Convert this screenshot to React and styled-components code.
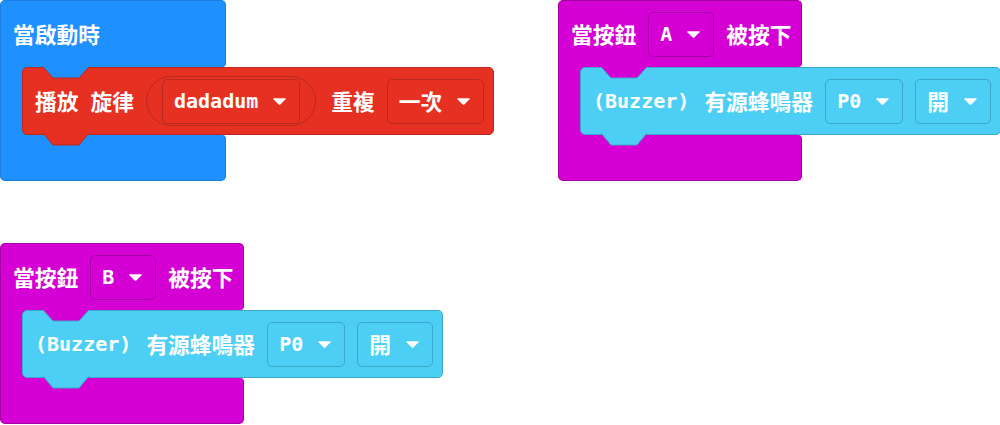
import React from 'react'
import styled, { createGlobalStyle } from 'styled-components'

const GlobalStyle = createGlobalStyle`
  html, body {
    margin: 0;
    background: #ffffff;
  }
  body {
    font-family: 'DejaVu Sans Mono', 'Noto Sans CJK TC', monospace;
  }
`

const colors = {
  start: { fill: '#1e90ff', line: '#1a7ee0' },
  music: { fill: '#e63022', line: '#b82a1e' },
  input: { fill: '#d400d4', line: '#a300a3' },
  buzzer: { fill: '#4dcff5', line: '#3aa8c8' },
}

// 下拉選單的小三角形
const Arrow = () => (
  <svg width="15" height="9" viewBox="0 0 15 9">
    <path
      d="M2 1.2 L13 1.2 Q14.2 1.2 13.5 2.2 L8.3 7.6 Q7.5 8.4 6.7 7.6 L1.5 2.2 Q0.8 1.2 2 1.2 Z"
      fill="#ffffff"
    />
  </svg>
)

const Notch = ({ color, line }) => (
  <NotchSvg width="48" height="13" viewBox="0 0 48 13">
    <path d="M0 0 L1 0 L11 11 L37 11 L47 0 L48 0 L48 -1 L0 -1 Z" fill={color} />
    <path d="M1 0 L11 11 L37 11 L47 0" fill="none" stroke={line} strokeWidth="1" />
  </NotchSvg>
)

const Tab = ({ color, line }) => (
  <TabSvg width="48" height="14" viewBox="0 0 48 14">
    <path d="M1 0 L11 12 L37 12 L47 0 Z" fill={color} />
    <path d="M1 0 L11 12 L37 12 L47 0" fill="none" stroke={line} strokeWidth="1" />
  </TabSvg>
)

const Dropdown = ({ line, children }) => (
  <DropBox $line={line}>
    {children}
    <Arrow />
  </DropBox>
)

const Statement = ({ parent, scheme, children }) => (
  <StatementBox $fill={scheme.fill} $line={scheme.line}>
    <Notch color={parent.fill} line={scheme.line} />
    {children}
    <Tab color={scheme.fill} line={scheme.line} />
  </StatementBox>
)

const HatBlock = ({ x, y, w, scheme, header, children }) => (
  <Hat $x={x} $y={y}>
    <HatHeader $w={w} $fill={scheme.fill} $line={scheme.line}>
      {header}
    </HatHeader>
    <HatBody>
      <Arm $fill={scheme.fill} $line={scheme.line} />
      {children}
    </HatBody>
    <HatFooter $w={w} $fill={scheme.fill} $line={scheme.line} />
  </Hat>
)

const ButtonBlock = ({ x, y, button }) => (
  <HatBlock
    x={x}
    y={y}
    w={244}
    scheme={colors.input}
    header={
      <>
        <Label>當按鈕</Label>
        <Dropdown line={colors.input.line}>
          <Mono>{button}</Mono>
        </Dropdown>
        <Label>被按下</Label>
      </>
    }
  >
    <Statement parent={colors.input} scheme={colors.buzzer}>
      <BuzzerText>
        <Mono>(Buzzer) </Mono>
        <Label>有源蜂鳴器</Label>
      </BuzzerText>
      <Dropdown line={colors.buzzer.line}>
        <Mono>P0</Mono>
      </Dropdown>
      <Dropdown line={colors.buzzer.line}>
        <Label>開</Label>
      </Dropdown>
    </Statement>
  </HatBlock>
)

const App = () => {
  return (
    <Workspace>
      <GlobalStyle />
      <HatBlock
        x={0}
        y={0}
        w={226}
        scheme={colors.start}
        header={<Label>當啟動時</Label>}
      >
        <Statement parent={colors.start} scheme={colors.music}>
          <Label>播放</Label>
          <Label>旋律</Label>
          <Pill $line={colors.music.line}>
            <Dropdown line={colors.music.line}>
              <Mono>dadadum</Mono>
            </Dropdown>
          </Pill>
          <Label $pushed>重複</Label>
          <Dropdown line={colors.music.line}>
            <Label>一次</Label>
          </Dropdown>
        </Statement>
      </HatBlock>
      <ButtonBlock x={558} y={0} button="A" />
      <ButtonBlock x={0} y={243} button="B" />
    </Workspace>
  )
}

const Workspace = styled.div`
  position: relative;
  width: 1000px;
  height: 425px;
  overflow: hidden;
  background: #ffffff;
  color: #ffffff;
`
const Hat = styled.div`
  position: absolute;
  left: ${(p) => p.$x}px;
  top: ${(p) => p.$y}px;
  display: flex;
  flex-direction: column;
`
const HatHeader = styled.div`
  box-sizing: border-box;
  width: ${(p) => p.$w}px;
  height: 67px;
  display: flex;
  align-items: center;
  gap: 12px;
  padding: 0 11px 0 12px;
  background: ${(p) => p.$fill};
  border: 1px solid ${(p) => p.$line};
  border-bottom: none;
  border-radius: 5px 5px 4px 0;
`
const HatBody = styled.div`
  display: flex;
  align-items: stretch;
`
const Arm = styled.div`
  box-sizing: border-box;
  width: 30px;
  margin-right: -8px;
  background: ${(p) => p.$fill};
  border-left: 1px solid ${(p) => p.$line};
`
const HatFooter = styled.div`
  box-sizing: border-box;
  width: ${(p) => p.$w}px;
  height: 46px;
  background: ${(p) => p.$fill};
  border: 1px solid ${(p) => p.$line};
  border-top: none;
  border-radius: 0 4px 5px 5px;
`
const StatementBox = styled.div`
  position: relative;
  box-sizing: border-box;
  height: 68px;
  display: flex;
  align-items: center;
  gap: 12px;
  padding: 0 9px 0 12px;
  background: ${(p) => p.$fill};
  border: 1px solid ${(p) => p.$line};
  border-radius: 5px;
  z-index: 1;
`
const NotchSvg = styled.svg`
  position: absolute;
  left: 19px;
  top: -1px;
  overflow: visible;
`
const TabSvg = styled.svg`
  position: absolute;
  left: 19px;
  bottom: -13px;
  overflow: visible;
`
const Label = styled.span`
  font-family: 'Noto Sans CJK TC', 'Noto Sans CJK SC', sans-serif;
  font-size: 21.75px;
  font-weight: 700;
  line-height: 1;
  white-space: nowrap;
  margin-left: ${(p) => (p.$pushed ? 3 : 0)}px;
`
const Mono = styled.span`
  font-family: 'DejaVu Sans Mono', 'Noto Sans CJK TC', monospace;
  font-size: 20px;
  font-weight: 700;
  line-height: 1;
  white-space: pre;
`
const BuzzerText = styled.span`
  display: flex;
  align-items: center;
  gap: 3px;
`
const DropBox = styled.div`
  box-sizing: border-box;
  height: 45px;
  display: flex;
  align-items: center;
  gap: 14px;
  padding: 0 12px 0 11px;
  border: 1px solid ${(p) => p.$line};
  border-radius: 5px;
`
const Pill = styled.div`
  box-sizing: border-box;
  height: 50px;
  display: flex;
  align-items: center;
  padding: 0 15px;
  border: 1px solid ${(p) => p.$line};
  border-radius: 25px;
`

export default App
